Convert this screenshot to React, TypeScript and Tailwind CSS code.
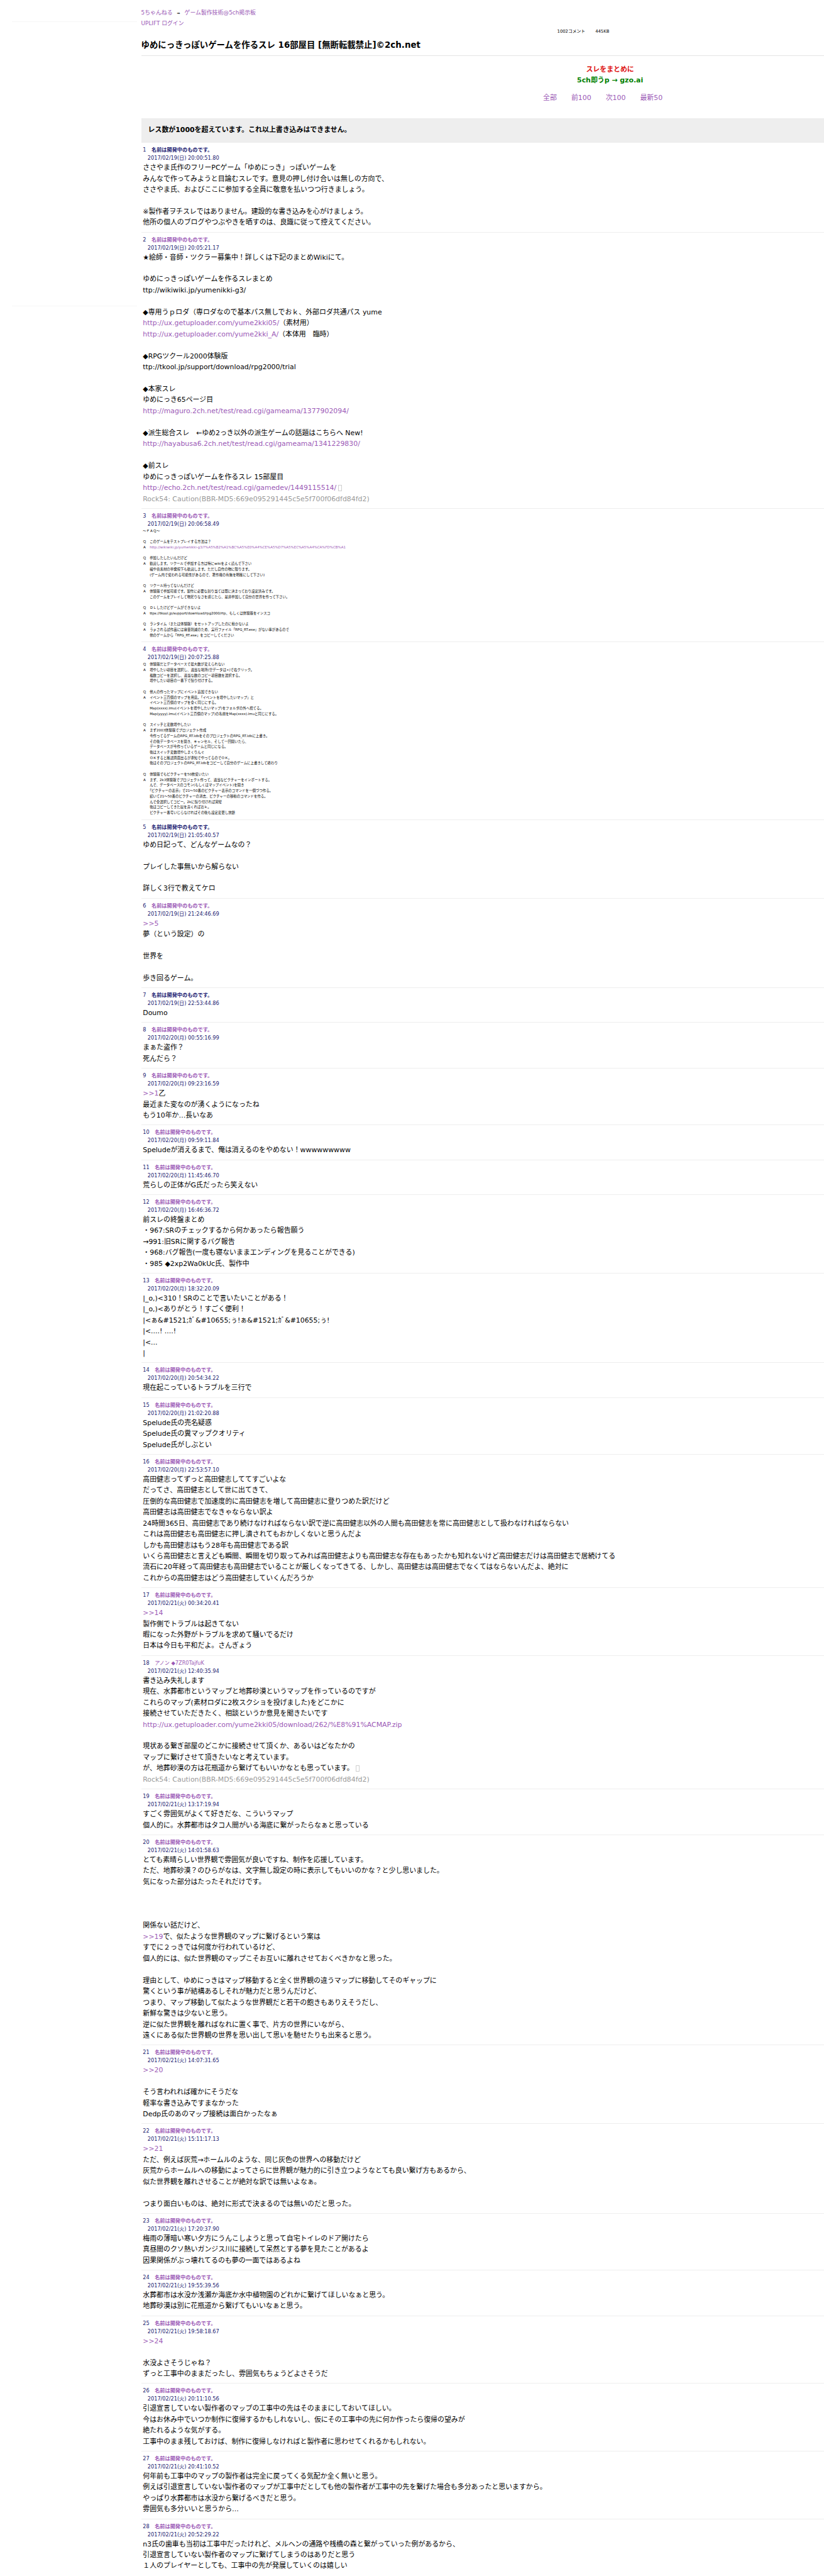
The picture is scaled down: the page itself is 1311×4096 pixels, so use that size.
const NAME = "名前は開発中のものです。";

type Post = {
  n: number;
  date: string;
  body: string;
  name?: string;
  navy?: boolean;
  small?: boolean;
  rock?: boolean;
  thin?: boolean;
};

const posts: Post[] = [
  { n: 1, navy: true, date: "2017/02/19(日) 20:00:51.80", body: `ささやま氏作のフリーPCゲーム「ゆめにっき」っぽいゲームを
みんなで作ってみようと目論むスレです。意見の押し付け合いは無しの方向で、
ささやま氏、およびここに参加する全員に敬意を払いつつ行きましょう。

※製作者ヲチスレではありません。建設的な書き込みを心がけましょう。
他所の個人のブログやつぶやきを晒すのは、良識に従って控えてください。` },
  { n: 2, rock: true, date: "2017/02/19(日) 20:05:21.17", body: `★絵師・音師・ツクラー募集中！詳しくは下記のまとめWikiにて。

ゆめにっきっぽいゲームを作るスレまとめ
ttp://wikiwiki.jp/yumenikki-g3/

◆専用うｐロダ（専ロダなので基本パス無しでおｋ、外部ロダ共通パス yume
[[http://ux.getuploader.com/yume2kki05/]]（素材用）
[[http://ux.getuploader.com/yume2kki_A/]]（本体用　臨時）

◆RPGツクール2000体験版
ttp://tkool.jp/support/download/rpg2000/trial

◆本家スレ
ゆめにっき65ページ目
[[http://maguro.2ch.net/test/read.cgi/gameama/1377902094/]]

◆派生総合スレ　←ゆめ2っき以外の派生ゲームの話題はこちらへ New!
[[http://hayabusa6.2ch.net/test/read.cgi/gameama/1341229830/]]

◆前スレ
ゆめにっきっぽいゲームを作るスレ 15部屋目
[[http://echo.2ch.net/test/read.cgi/gamedev/1449115514/]]{}` },
  { n: 3, small: true, date: "2017/02/19(日) 20:06:58.49", body: `～ＦＡＱ～

Ｑ　このゲームをテストプレイする方法は？
Ａ　[[http://wikiwiki.jp/yumenikki-g3/?%A5%B2%A1%BC%A5%E0%A4%CE%A5%D7%A5%EC%A5%A4%CA%FD%CB%A1]]

Ｑ　参加したしたいんだけど
Ａ　歓迎します。ツクールで参加する方は特にwikiをよく読んで下さい
　　絵や音素材の単発投下も歓迎します。ただし自作の物に限ります。
　　(ゲーム内で使われる可能性があるので、著作権の有無を明確にして下さい)

Ｑ　ツクール持ってないんだけど
Ａ　体験版で参加可能です。製作に必要な割り当ては既に決まっており設定済みです。
　　このゲームをプレイして物足りなさを感じたら、是非参加して自分の世界を作って下さい。

Ｑ　ＤＬしたけどゲームができないよ
Ａ　ttps://tkool.jp/support/download/rpg2000/rtp、もしくは体験版をインスコ

Ｑ　ランタイム（または体験版）をセットアップしたのに動かないよ
Ａ　うｐされる試作品には容量削減のため、実行ファイル「RPG_RT.exe」がない事があるので
　　他のゲームから「RPG_RT.exe」をコピーしてください` },
  { n: 4, small: true, date: "2017/02/19(日) 20:07:25.88", body: `Ｑ　体験版だとデータベースで最大数が変えられない
Ａ　増やしたい項目を選択し、適当な場所(空データは×)で右クリック。
　　複数コピーを選択し、適当な数のコピー項目数を選択する。
　　増やしたい項目の一番下で貼り付けする。

Ｑ　他人の作ったマップにイベント追加できない
Ａ　イベント三百個のマップを用意。「イベントを増やしたいマップ」と
　　イベント三百個のマップを全く同じにする。
　　Map(xxxx).lmu(イベントを増やしたいマップ)をフォルダの外へ捨てる。
　　Map(yyyy).lmu(イベント三百個のマップ)の名前をMap(xxxx).lmuと同じにする。

Ｑ　スイッチと変数増やしたい
Ａ　まず2003体験版でプロジェクト作成
　　今作ってるゲームのRPG_RT.ldbをそのプロジェクトのRPG_RT.ldbに上書き。
　　その後データベースを開き、キャンセル、そして一回開いたら、
　　データベースが今作っているゲームと同じになる。
　　後はスイッチ変数増やしまくりんぐ
　　ＯＫすると確認画面出るが承知でやってるのでＯＫ。
　　後はそのプロジェクトのRPG_RT.ldbをコピーして自分のゲームに上書きして終わり

Ｑ　体験版でもピクチャーを50枚使いたい
Ａ　まず、2k3体験版でプロジェクト作って、適当なピクチャーをインポートする。
　　んで、データベースのコモン(もしくはマップイベント)を開き
　　「ピクチャーの表示」で21～50番のピクチャー表示のコマンドを一個づつ作る。
　　続いて21～50番のピクチャーの消去、ピクチャーの移動のコマンドを作る。
　　んで全選択してコピー。2kに貼り付ければ完璧
　　後はコピーしてきた奴を弄くればおｋ。
　　ピクチャー番号いじらなければその後も設定変更し放題` },
  { n: 5, navy: true, date: "2017/02/19(日) 21:05:40.57", body: `ゆめ日記って、どんなゲームなの？

プレイした事無いから解らない

詳しく3行で教えてケロ` },
  { n: 6, date: "2017/02/19(日) 21:24:46.69", body: `[[>>5]]
夢（という設定）の

世界を

歩き回るゲーム｡` },
  { n: 7, navy: true, date: "2017/02/19(日) 22:53:44.86", body: `Doumo` },
  { n: 8, date: "2017/02/20(月) 00:55:16.99", body: `まぁた盗作？
死んだら？` },
  { n: 9, date: "2017/02/20(月) 09:23:16.59", body: `[[>>1]]乙
最近また変なのが湧くようになったね
もう10年か…長いなあ` },
  { n: 10, date: "2017/02/20(月) 09:59:11.84", body: `Speludeが消えるまで、俺は消えるのをやめない！wwwwwwwww` },
  { n: 11, date: "2017/02/20(月) 11:45:46.70", body: `荒らしの正体がG氏だったら笑えない` },
  { n: 12, date: "2017/02/20(月) 16:46:36.72", body: `前スレの終盤まとめ
・967:SRのチェックするから何かあったら報告願う
→991:旧SRに関するバグ報告
・968:バグ報告(一度も寝ないままエンディングを見ることができる)
・985 ◆2xp2Wa0kUc氏、製作中` },
  { n: 13, date: "2017/02/20(月) 18:32:20.09", body: `|_o,)<310！SRのことで言いたいことがある！
|_o,)<ありがとう！すごく便利！
|<ぁ&#1521;ｶﾞ&#10655;ぅ!ぁ&#1521;ｶﾞ&#10655;ぅ!
|<....! ....!
|<...
|` },
  { n: 14, date: "2017/02/20(月) 20:54:34.22", body: `現在起こっているトラブルを三行で` },
  { n: 15, date: "2017/02/20(月) 21:02:20.88", body: `Spelude氏の売名疑惑
Spelude氏の糞マップクオリティ
Spelude氏がしぶとい` },
  { n: 16, date: "2017/02/20(月) 22:53:57.10", body: `高田健志ってずっと高田健志しててすごいよな
だってさ、高田健志として世に出てきて、
圧倒的な高田健志で加速度的に高田健志を増して高田健志に登りつめた訳だけど
高田健志は高田健志でなきゃならない訳よ
24時間365日、高田健志であり続けなければならない訳で逆に高田健志以外の人間も高田健志を常に高田健志として扱わなければならない
これは高田健志も高田健志に押し潰されてもおかしくないと思うんだよ
しかも高田健志はもう28年も高田健志である訳
いくら高田健志と言えども瞬間、瞬間を切り取ってみれば高田健志よりも高田健志な存在もあったかも知れないけど高田健志だけは高田健志で居続けてる
流石に20年経って高田健志も高田健志でいることが厳しくなってきてる、しかし、高田健志は高田健志でなくてはならないんだよ、絶対に
これからの高田健志はどう高田健志していくんだろうか` },
  { n: 17, date: "2017/02/21(火) 00:34:20.41", body: `[[>>14]]
製作側でトラブルは起きてない
暇になった外野がトラブルを求めて騒いでるだけ
日本は今日も平和だよ。さんぎょう` },
  { n: 18, name: "アノン ◆7ZR0TajfuK", thin: true, rock: true, date: "2017/02/21(火) 12:40:35.94", body: `書き込み失礼します
現在、水葬都市というマップと地葬砂漠というマップを作っているのですが
これらのマップ(素材ロダに2枚スクショを投げました)をどこかに
接続させていただきたく、相談というか意見を聞きたいです
[[http://ux.getuploader.com/yume2kki05/download/262/%E8%91%ACMAP.zip]]

現状ある繋ぎ部屋のどこかに接続させて頂くか、あるいはどなたかの
マップに繋げさせて頂きたいなと考えています。
が、地葬砂漠の方は花瓶道から繋げてもいいかなとも思っています。{}` },
  { n: 19, date: "2017/02/21(火) 13:17:19.94", body: `すごく雰囲気がよくて好きだな、こういうマップ
個人的に。水葬都市はタコ人間がいる海底に繋がったらなぁと思っている` },
  { n: 20, date: "2017/02/21(火) 14:01:58.63", body: `とても素晴らしい世界観で雰囲気が良いですね、制作を応援しています。
ただ、地葬砂漠？のひらがなは、文字無し設定の時に表示してもいいのかな？と少し思いました。
気になった部分はたったそれだけです。



関係ない話だけど、
[[>>19]]で、似たような世界観のマップに繋げるという案は
すでに２っきでは何度か行われているけど、
個人的には、似た世界観のマップこそお互いに離れさせておくべきかなと思った。

理由として、ゆめにっきはマップ移動すると全く世界観の違うマップに移動してそのギャップに
驚くという事が結構あるしそれが魅力だと思うんだけど、
つまり、マップ移動して似たような世界観だと若干の飽きもありえそうだし、
新鮮な驚きは少ないと思う。
逆に似た世界観を離ればなれに置く事で、片方の世界にいながら、
遠くにある似た世界観の世界を思い出して思いを馳せたりも出来ると思う。` },
  { n: 21, date: "2017/02/21(火) 14:07:31.65", body: `[[>>20]]

そう言われれば確かにそうだな
軽率な書き込みですまなかった
Dedp氏のあのマップ接続は面白かったなぁ` },
  { n: 22, date: "2017/02/21(火) 15:11:17.13", body: `[[>>21]]
ただ、例えば灰荒→ホームルのような、同じ灰色の世界への移動だけど
灰荒からホームルへの移動によってさらに世界観が魅力的に引き立つようなとても良い繋げ方もあるから、
似た世界観を離れさせることが絶対な訳では無いよなぁ。

つまり面白いものは、絶対に形式で決まるのでは無いのだと思った。` },
  { n: 23, date: "2017/02/21(火) 17:20:37.90", body: `梅雨の薄暗い寒い夕方にうんこしようと思って自宅トイレのドア開けたら
真昼間のクソ熱いガンジス川に接続して呆然とする夢を見たことがあるよ
因果関係がぶっ壊れてるのも夢の一面ではあるよね` },
  { n: 24, date: "2017/02/21(火) 19:55:39.56", body: `水葬都市は水没か浅瀬か海底か水中植物園のどれかに繋げてほしいなぁと思う。
地葬砂漠は別に花瓶道から繋げてもいいなぁと思う。` },
  { n: 25, date: "2017/02/21(火) 19:58:18.67", body: `[[>>24]]

水没よさそうじゃね？
ずっと工事中のままだったし、雰囲気もちょうどよさそうだ` },
  { n: 26, date: "2017/02/21(火) 20:11:10.56", body: `引退宣言していない製作者のマップの工事中の先はそのままにしておいてほしい。
今はお休み中でいつか制作に復帰するかもしれないし、仮にその工事中の先に何か作ったら復帰の望みが
絶たれるような気がする。
工事中のまま残しておけば、制作に復帰しなければと製作者に思わせてくれるかもしれない。` },
  { n: 27, date: "2017/02/21(火) 20:41:10.52", body: `何年前も工事中のマップの製作者は完全に戻ってくる気配か全く無いと思う。
例えば引退宣言していない製作者のマップが工事中だとしても他の製作者が工事中の先を繋げた場合も多分あったと思いますから。
やっぱり水葬都市は水没から繋げるべきだと思う。
雰囲気も多分いいと思うから…` },
  { n: 28, date: "2017/02/21(火) 20:52:29.22", body: `n3氏の歯車も当初は工事中だったけれど、メルヘンの通路や桟橋の森と繋がっていった例があるから、
引退宣言していない製作者のマップに繋げてしまうのはありだと思う
１人のプレイヤーとしても、工事中の先が発展していくのは嬉しい` },
];

function Line({ text }: { text: string }) {
  if (text === "") return <div>{"\u00A0"}</div>;
  const parts = text.split(/(\[\[.*?\]\]|\{\})/);
  return (
    <div>
      {parts.map((p, i) => {
        if (p.startsWith("[[")) {
          return (
            <a key={i} className="text-[#9b59b6]">
              {p.slice(2, -2)}
            </a>
          );
        }
        if (p === "{}") {
          return (
            <span
              key={i}
              className="ml-[3px] inline-block h-[10px] w-[6px] border border-[#cfcfcf] align-[-2px]"
            />
          );
        }
        return <span key={i}>{p}</span>;
      })}
    </div>
  );
}

function PostItem({ post }: { post: Post }) {
  const isFirst = post.n === 1;
  return (
    <div className={isFirst ? "pl-[2.7px]" : "border-t border-[#eeeeee] pl-[2.7px]"}>
      <div className="pb-[5.8px] pt-[5px]">
        <div className="flex h-[13px] items-center text-[8.18px] leading-[13px]">
          <span className="text-[#191970]">{post.n}</span>
          <span
            className={`ml-[8.5px] ${post.thin ? "font-normal" : "font-bold"} ${
              post.navy ? "text-[#191970]" : "text-[#9b59b6]"
            }`}
          >
            {post.name ?? NAME}
          </span>
        </div>
        <div className="h-[13px] pl-[7.5px] text-[8.18px] leading-[13px] text-[#191970]">
          {post.date}
        </div>
        <div
          className={
            post.small
              ? "whitespace-pre text-[5.456px] leading-[8.73px] text-black"
              : "whitespace-pre text-[10.912px] leading-[17.46px] text-black"
          }
        >
          {post.body.split("\n").map((l, i) => (
            <Line key={i} text={l} />
          ))}
          {post.rock && (
            <div className="text-[#999999]">
              Rock54: Caution(BBR-MD5:669e095291445c5e5f700f06dfd84fd2)
            </div>
          )}
        </div>
      </div>
    </div>
  );
}

export default function App() {
  return (
    <div className="flex h-[4096px] w-full overflow-hidden bg-white font-['DejaVu_Sans','Noto_Sans_CJK_JP',sans-serif]">
      <aside className="ml-[19px] w-[199px] shrink-0 pt-[34px]">
        <div className="border-t border-[#f6f6f6]" />
        <div className="mt-[451px] border-t border-[#f6f6f6]" />
      </aside>
      <main className="ml-[6.6px] w-[1492px] shrink-0">
        <div className="mt-[14px] flex h-[13px] items-center text-[8.87px] leading-[13px] text-[#9b59b6]">
          <a>5ちゃんねる</a>
          <span className="mx-[7px] text-[6px] text-[#333333]">➡</span>
          <a>ゲーム製作技術@5ch掲示板</a>
        </div>
        <div className="mt-[4px] h-[13px] text-[8.87px] leading-[13px] text-[#9b59b6]">
          <a>UPLIFT ログイン</a>
        </div>
        <div className="ml-[662px] mt-[1px] flex h-[10px] gap-[16px] text-[6.82px] leading-[10px] text-black">
          <span>1002コメント</span>
          <span>445KB</span>
        </div>
        <h1 className="mt-[6.5px] h-[19px] text-[13.4px] font-bold leading-[19px] text-black">
          ゆめにっきっぽいゲームを作るスレ 16部屋目 [無断転載禁止]©2ch.net
        </h1>
        <div className="mt-[7.3px] border-t border-[#e4e4e4]" />
        <div className="mt-[13px] text-center text-[10.912px] font-bold leading-[17.5px]">
          <div className="text-[#dd1111]">スレをまとめに</div>
          <div className="text-[#008000]">5ch即うp → gzo.ai</div>
        </div>
        <div className="mt-[10.5px] flex justify-center text-[10.912px] leading-[17.5px] text-[#9b59b6]">
          <a className="mr-[23px]">全部</a>
          <a className="mr-[23px]">前100</a>
          <a className="mr-[23px]">次100</a>
          <a className="mr-[23px]">最新50</a>
        </div>
        <div className="mt-[22.75px] flex h-[39.5px] items-center bg-[#eeeeee] pl-[11px] text-[10.912px] font-bold text-black">
          レス数が1000を超えています。これ以上書き込みはできません。
        </div>
        {posts.map((p) => (
          <PostItem key={p.n} post={p} />
        ))}
      </main>
    </div>
  );
}
